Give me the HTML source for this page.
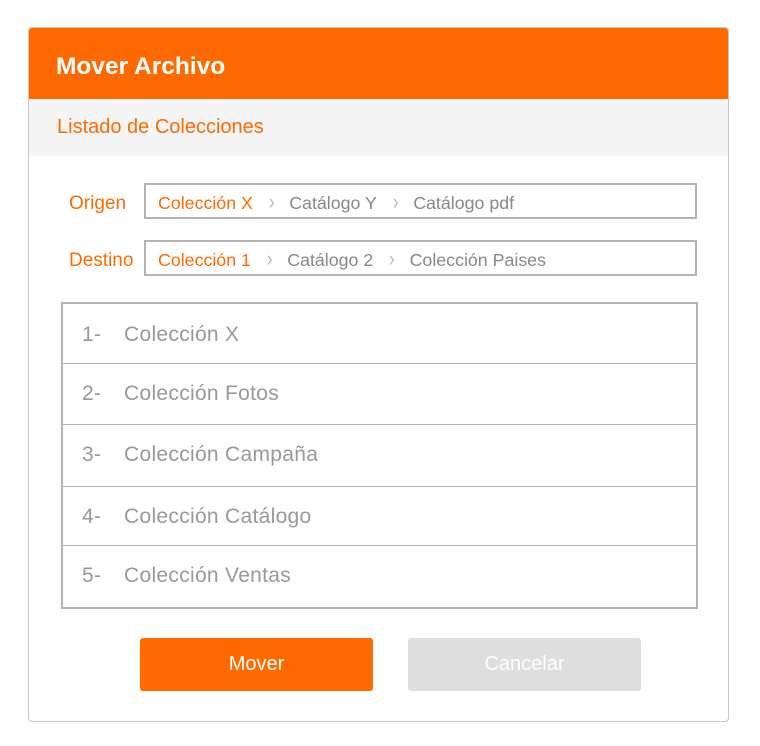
<!DOCTYPE html>
<html><head><meta charset="utf-8"><style>
*{margin:0;padding:0;box-sizing:border-box}
body{width:760px;height:746px;background:#fff;font-family:"Liberation Sans",sans-serif;position:relative;overflow:hidden}
.card{position:absolute;left:28px;top:27px;width:701px;height:695px;border:1px solid #c8c8c8;border-radius:4px;overflow:hidden}
.hd{position:absolute;left:0;top:0;width:100%;height:71px;background:#ff6a00;color:#fff;font-weight:bold;font-size:24.5px;padding:25px 0 0 27px}
.sub{position:absolute;left:0;top:71px;width:100%;height:57px;background:#f5f5f5;color:#ff6a00;font-size:20px;padding:17px 0 0 28px}
.lbl{position:absolute;color:#ff6a00;font-size:19px}
.bc{position:absolute;left:115px;width:553px;height:36px;border:2px solid #b3b3b3;font-size:17.8px;color:#888;padding:8px 0 0 12px;white-space:nowrap}
.bc .o{color:#ff6a00}
.bc .s{color:#bbb;margin:0 14px 0 15px;font-size:22px;line-height:18px;display:inline-block;transform:scaleX(.8)}
.list{position:absolute;left:32px;top:274px;width:637px;height:307px;border:2px solid #b3b3b3}
.row{height:61px;border-bottom:1px solid #b3b3b3;font-size:21px;color:#999;padding:18px 0 0 19px;letter-spacing:.3px}
.row:last-child{border-bottom:none}
.row span{display:inline-block;width:42px}
.btn{position:absolute;top:610px;width:233px;height:53px;border-radius:3px;font-size:20px;text-align:center;line-height:53px}
</style></head><body>
<div class="card">
<div class="hd">Mover Archivo</div>
<div class="sub">Listado de Colecciones</div>
<div class="lbl" style="left:40px;top:165px">Origen</div>
<div class="bc" style="top:155px"><span class="o">Colección X</span><span class="s">›</span>Catálogo Y<span class="s">›</span>Catálogo pdf</div>
<div class="lbl" style="left:40px;top:222px">Destino</div>
<div class="bc" style="top:212px"><span class="o">Colección 1</span><span class="s">›</span>Catálogo 2<span class="s">›</span>Colección Paises</div>
<div class="list">
<div class="row" style="height:60px;padding-top:19px"><span>1-</span>Colección X</div>
<div class="row"><span>2-</span>Colección Fotos</div>
<div class="row" style="height:62px"><span>3-</span>Colección Campaña</div>
<div class="row" style="height:59px"><span>4-</span>Colección Catálogo</div>
<div class="row"><span>5-</span>Colección Ventas</div>
</div>
<div class="btn" style="left:111px;background:#ff6a00;color:#fff">Mover</div>
<div class="btn" style="left:379px;background:#dedede;color:#fff">Cancelar</div>
</div>
</body></html>
